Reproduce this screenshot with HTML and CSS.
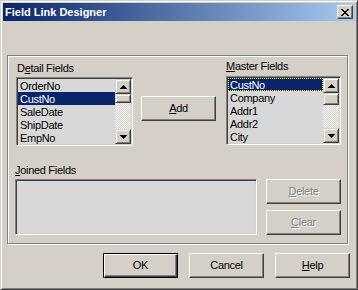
FILE: index.html
```html
<!DOCTYPE html>
<html lang="en">
<head>
    <meta charset="UTF-8">
    <title>Field Link Designer</title>
    <link rel="stylesheet" href="styles.css">
</head>
<body>
    <div class="window">
        <div class="titlebar">
            <span class="title">Field Link Designer</span>
            <button class="close" type="button">
                <svg width="8" height="7" viewBox="0 0 8 7" shape-rendering="crispEdges"><path d="M0 0h2v1H0zM6 0h2v1H6zM1 1h2v1H1zM5 1h2v1H5zM2 2h4v1H2zM3 3h2v1H3zM2 4h4v1H2zM1 5h2v1H1zM5 5h2v1H5zM0 6h2v1H0zM6 6h2v1H6z"/></svg>
            </button>
        </div>

        <div class="client">
            <div class="group">
                <div class="top-row">
                    <div class="field-col detail">
                        <label class="caption">D<u>e</u>tail Fields</label>
                        <div class="listbox">
                            <ul class="items">
                                <li>OrderNo</li>
                                <li class="selected">CustNo</li>
                                <li>SaleDate</li>
                                <li>ShipDate</li>
                                <li>EmpNo</li>
                            </ul>
                            <div class="scrollbar">
                                <span class="sb-btn"><svg width="7" height="4" viewBox="0 0 7 4" shape-rendering="crispEdges"><path d="M3 0h1v1h1v1h1v1h1v1H0V3h1V2h1V1h1z"/></svg></span>
                                <span class="sb-thumb"></span>
                                <span class="sb-track"></span>
                                <span class="sb-btn"><svg width="7" height="4" viewBox="0 0 7 4" shape-rendering="crispEdges"><path d="M0 0h7v1H6v1H5v1H4v1H3V3H2V2H1V1H0z"/></svg></span>
                            </div>
                        </div>
                    </div>

                    <div class="add-col">
                        <button class="btn" type="button"><u>A</u>dd</button>
                    </div>

                    <div class="field-col master">
                        <label class="caption"><u>M</u>aster Fields</label>
                        <div class="listbox">
                            <ul class="items">
                                <li class="selected focused">CustNo</li>
                                <li>Company</li>
                                <li>Addr1</li>
                                <li>Addr2</li>
                                <li>City</li>
                            </ul>
                            <div class="scrollbar">
                                <span class="sb-btn"><svg width="7" height="4" viewBox="0 0 7 4" shape-rendering="crispEdges"><path d="M3 0h1v1h1v1h1v1h1v1H0V3h1V2h1V1h1z"/></svg></span>
                                <span class="sb-thumb big"></span>
                                <span class="sb-track"></span>
                                <span class="sb-btn"><svg width="7" height="4" viewBox="0 0 7 4" shape-rendering="crispEdges"><path d="M0 0h7v1H6v1H5v1H4v1H3V3H2V2H1V1H0z"/></svg></span>
                            </div>
                        </div>
                    </div>
                </div>

                <div class="bottom-row">
                    <div class="joined-col">
                        <label class="caption"><u>J</u>oined Fields</label>
                        <div class="joined-box"></div>
                    </div>
                    <div class="side-buttons">
                        <button class="btn disabled" type="button"><u>D</u>elete</button>
                        <button class="btn disabled" type="button"><u>C</u>lear</button>
                    </div>
                </div>
            </div>

            <div class="dialog-buttons">
                <button class="btn default" type="button">OK</button>
                <button class="btn" type="button">Cancel</button>
                <button class="btn" type="button"><u>H</u>elp</button>
            </div>
        </div>
    </div>
</body>
</html>
```

FILE: styles.css
```css
* {
    box-sizing: border-box;
}
body {
    margin: 0;
    font-family: "Liberation Sans", Arial, sans-serif;
    font-size: 11px;
    letter-spacing: -0.3px;
    background-color: #d4d0c8;
}
.window {
    width: 358px;
    height: 290px;
    padding: 2px;
    background-color: #d4d0c8;
    border: 1px solid;
    border-color: #d4d0c8 #404040 #404040 #d4d0c8;
    box-shadow: inset 1px 1px #fff, inset -1px -1px #808080;
}
.titlebar {
    height: 18px;
    display: flex;
    align-items: center;
    justify-content: space-between;
    padding: 0 2px;
    background: linear-gradient(to right, #0a246a, #a6caf0);
    color: white;
}
.title {
    font-weight: bold;
    line-height: 13px;
    letter-spacing: 0;
}
.close {
    width: 16px;
    height: 14px;
    padding: 0;
    display: flex;
    align-items: center;
    justify-content: center;
    background-color: #d4d0c8;
    border: 1px solid;
    border-color: #fff #404040 #404040 #fff;
    box-shadow: inset -1px -1px #808080;
}
.client {
    padding: 34px 0 0 4px;
}
.group {
    width: 341px;
    padding: 6px 6px 8px 8px;
    border: 1px solid #808080;
    box-shadow: inset 1px 1px #fff, 1px 1px #fff;
}
.top-row,
.bottom-row {
    display: flex;
}
.caption {
    display: block;
    height: 13px;
    line-height: 13px;
    margin-bottom: 2px;
}
.detail {
    width: 117px;
}
.detail .caption {
    padding-left: 1px;
}
.add-col {
    width: 75px;
    margin-left: 8px;
    padding-top: 34px;
}
.master {
    width: 115px;
    margin-left: 10px;
    margin-top: -2px;
}
.master .caption {
    margin-bottom: 3px;
}
.listbox,
.joined-box {
    background-color: #d8d8d8;
    border: 1px solid;
    border-color: #808080 #fff #fff #808080;
    box-shadow: inset 1px 1px #404040, inset -1px -1px #d4d0c8;
    padding: 1px;
}
.listbox {
    height: 69px;
    display: flex;
}
.items {
    flex: 1;
    list-style: none;
    margin: 0;
    padding: 0;
    overflow: hidden;
}
.items li {
    height: 13px;
    line-height: 15px;
    padding-left: 2px;
    white-space: nowrap;
}
.items li.selected {
    background-color: #0a246a;
    color: white;
}
.items li.focused {
    outline: 1px dotted #ffff00;
    outline-offset: -1px;
}
.scrollbar {
    width: 16px;
    display: flex;
    flex-direction: column;
}
.sb-btn,
.sb-thumb {
    background-color: #d4d0c8;
    border: 1px solid;
    border-color: #d4d0c8 #404040 #404040 #d4d0c8;
    box-shadow: inset 1px 1px #fff, inset -1px -1px #808080;
}
.sb-btn {
    height: 15px;
    display: flex;
    align-items: center;
    justify-content: center;
}
.sb-thumb {
    height: 9px;
}
.sb-thumb.big {
    height: 12px;
}
.sb-track {
    flex: 1;
    background-image: repeating-conic-gradient(#fff 0 25%, #d4d0c8 0 50%);
    background-size: 2px 2px;
}
.bottom-row {
    margin-top: 18px;
}
.joined-col {
    width: 242px;
    margin-left: -1px;
}
.joined-box {
    height: 56px;
}
.side-buttons {
    width: 75px;
    margin-left: 9px;
    padding-top: 15px;
    display: flex;
    flex-direction: column;
    gap: 6px;
}
.btn {
    width: 75px;
    height: 25px;
    padding: 0 0 2px;
    font: inherit;
    letter-spacing: inherit;
    color: black;
    background-color: #d4d0c8;
    border: 1px solid;
    border-color: #fff #404040 #404040 #fff;
    box-shadow: inset -1px -1px #808080;
}
.btn.default {
    border-color: #000;
    box-shadow: inset 1px 1px #fff, inset -1px -1px #404040, inset -2px -2px #808080;
}
.btn.disabled {
    color: #808080;
    text-shadow: 1px 1px #fff;
}
.dialog-buttons {
    margin-top: 9px;
    padding-right: 5px;
    display: flex;
    justify-content: flex-end;
    gap: 11px;
}
```
